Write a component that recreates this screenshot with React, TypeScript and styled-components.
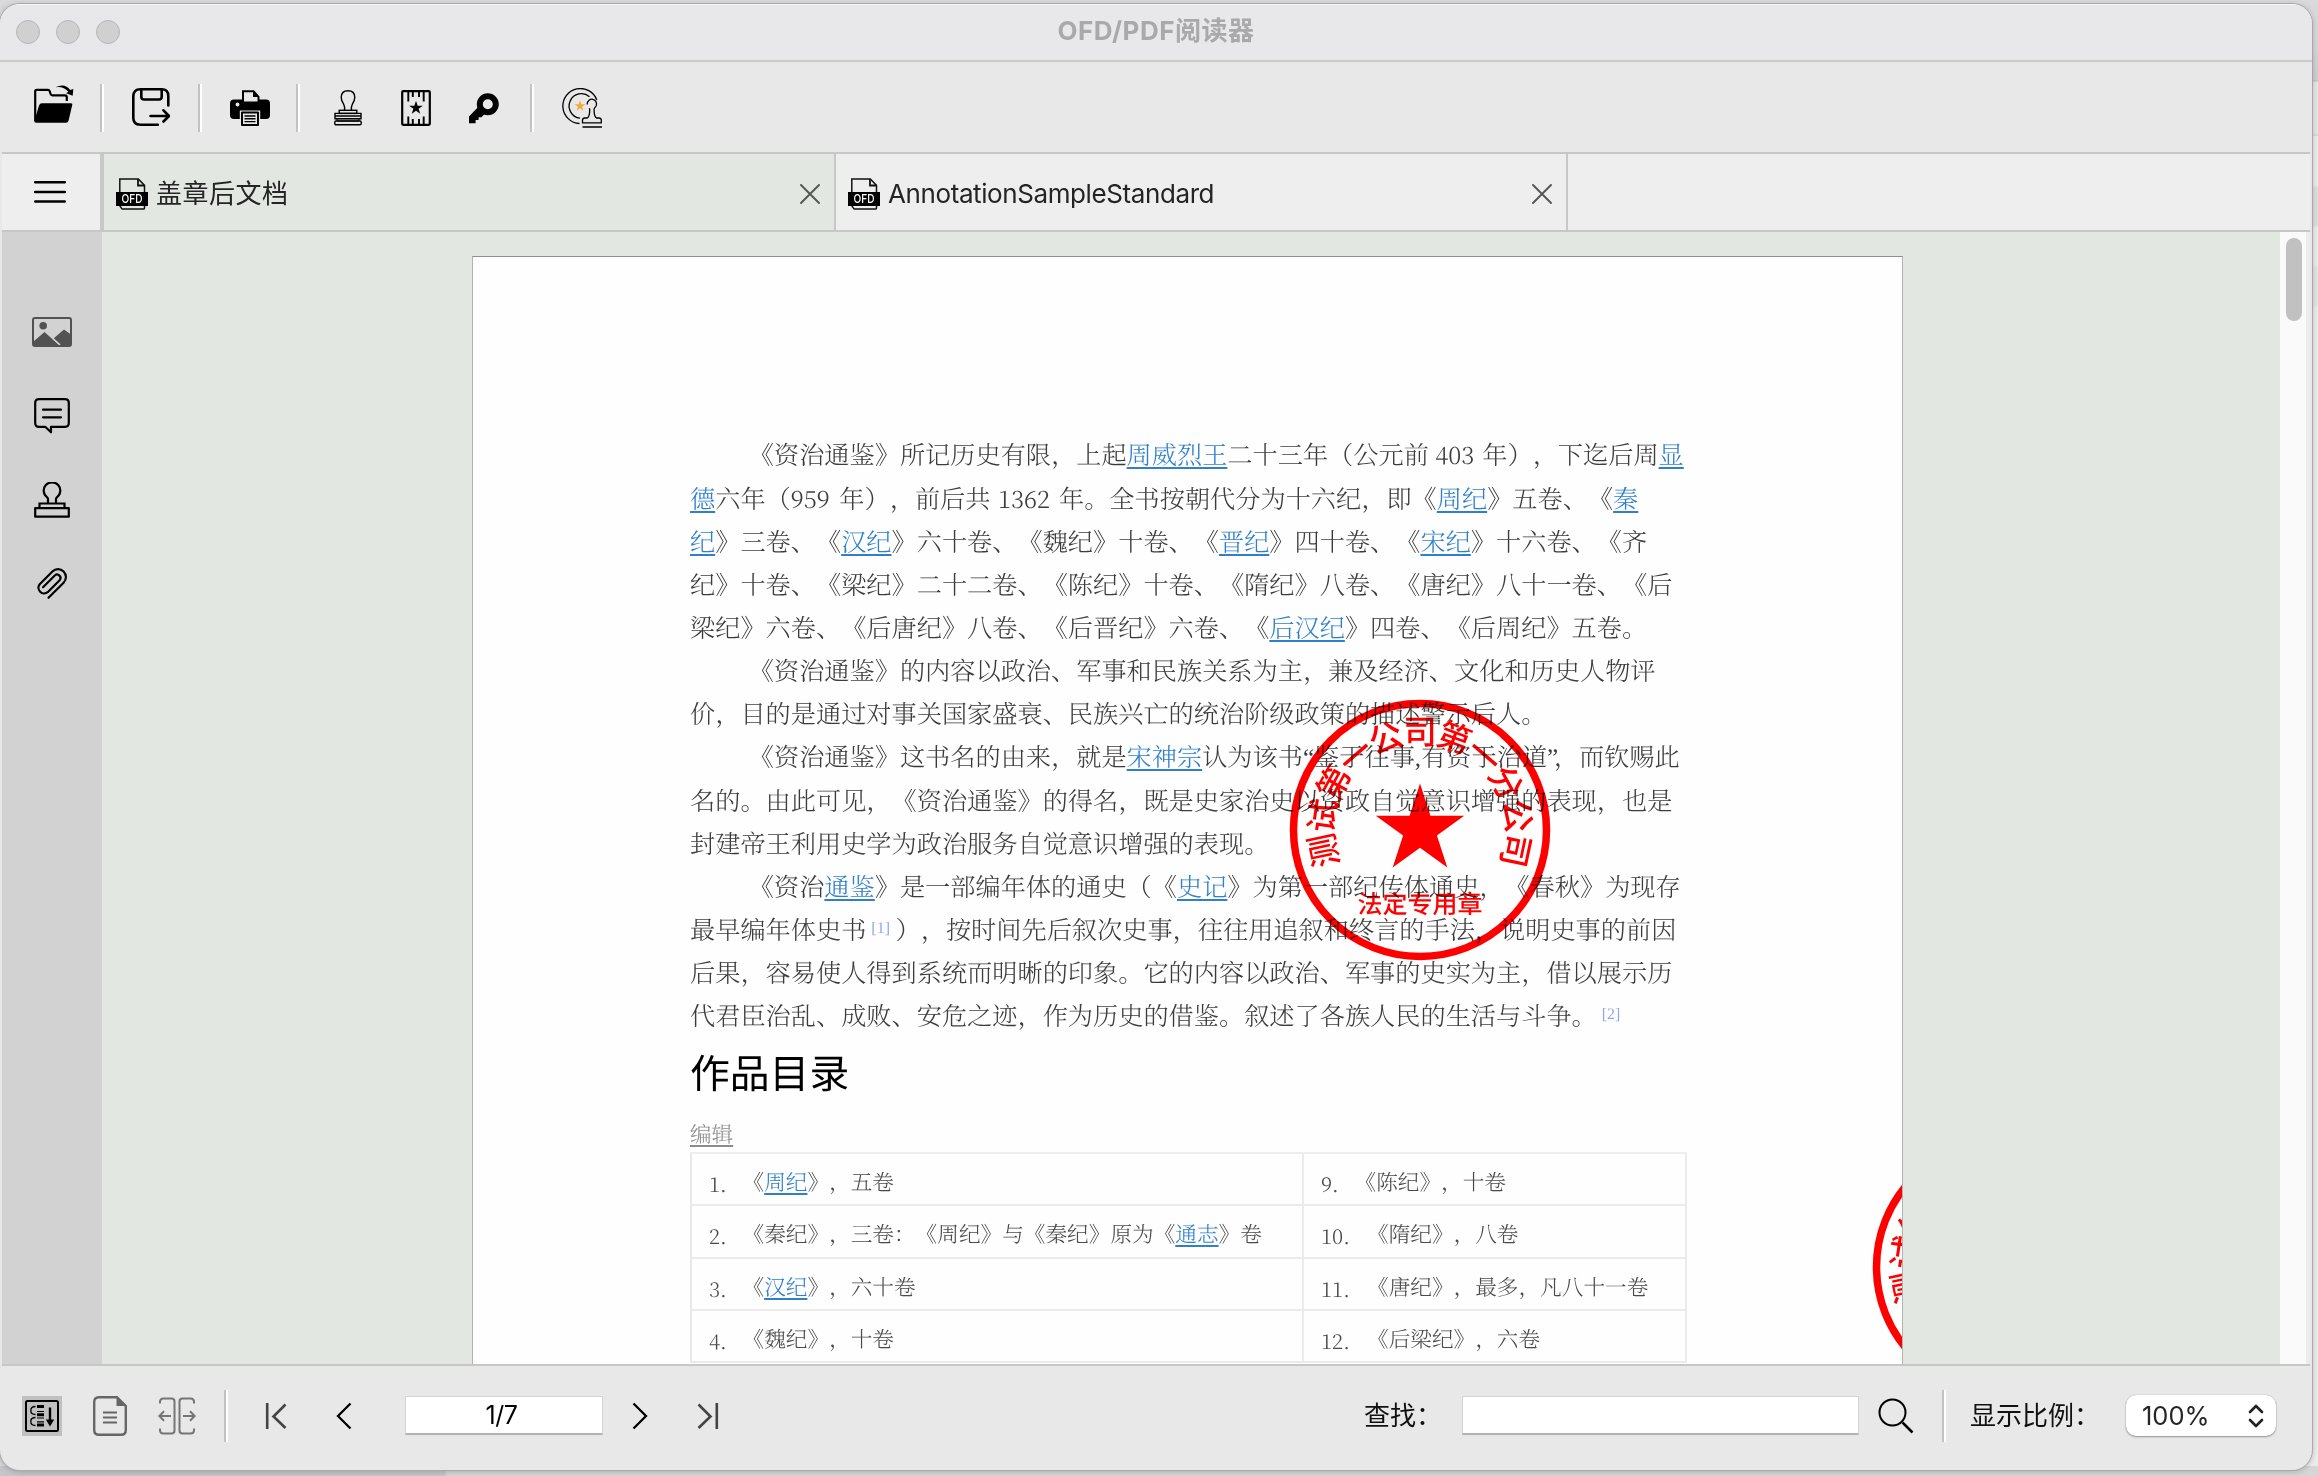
import React from 'react';
import styled, { createGlobalStyle } from 'styled-components';

const UI_FONT = `Inter, 'Noto Sans CJK SC', sans-serif`;
const DOC_FONT = `'Liberation Serif', 'Noto Serif CJK SC', 'Noto Sans CJK SC', serif`;
const CHROME = '#e8e8e8';
const CANVAS = '#e2e8e1';
const LINE = '#c6c8c6';

const GlobalStyle = createGlobalStyle`
  * { box-sizing: border-box; }
  html, body { margin: 0; padding: 0; }
  body { width: 2318px; height: 1476px; overflow: hidden; font-family: ${UI_FONT}; }
  svg { display: block; flex: none; }
`;

/* ---------- window frame ---------- */

const Desktop = styled.div`
  width: 2318px;
  height: 1476px;
  padding: 4px 6px 6px 0;
  background:
    linear-gradient(#dadadc, #dadadc) 0 0 / 100% 5px no-repeat,
    linear-gradient(90deg, #c6c6c8 445px, #d6d6d6 446px) 0 1466px / 100% 10px no-repeat,
    linear-gradient(#d8d8da 0 40px, #cfcfd1 80px, #bcbcbe 81px, #e6e6e6 82px 134px, #c8c8c8 135px, #ececec 136px 186px, #dedede 187px 226px, #ececec 227px 266px, #e4e4e4 267px 306px, #ececec 307px) 2300px 0 / 18px 100% no-repeat,
    #d8d8da;
`;

const Window = styled.main`
  display: flex;
  flex-direction: column;
  width: 2312px;
  height: 1466px;
  overflow: hidden;
  border-radius: 20px;
  background: ${CHROME};
  box-shadow: 0 0 0 1px #a9a9ab, 0 1px 6px rgba(0, 0, 0, 0.25);
`;

const TitleBar = styled.header`
  display: grid;
  grid-template-columns: 1fr auto 1fr;
  align-items: center;
  flex: none;
  height: 58px;
  padding: 0 16px;
  background: #e8e8ea;
  border-bottom: 2px solid #cacacb;
  box-shadow: inset 0 1px 0 #f6f6f7;
`;

const Lights = styled.div`
  display: flex;
  gap: 16px;
`;

const Light = styled.span`
  width: 24px;
  height: 24px;
  border-radius: 50%;
  background: #d0d0d1;
  border: 1px solid #b6b6b7;
`;

const Title = styled.h1`
  margin: 0;
  padding-bottom: 3px;
  font-size: 26px;
  font-weight: 700;
  line-height: 40px;
  color: #a9a9ab;
  letter-spacing: 0.5px;
`;

/* ---------- toolbar ---------- */

const ToolBar = styled.div`
  display: flex;
  align-items: center;
  flex: none;
  height: 92px;
  margin: 0 2px;
  padding-top: 2px;
  border-bottom: 2px solid ${LINE};
`;

const Tool = styled.button<{ $w: number; $pad?: number; $lift?: number }>`
  display: flex;
  align-items: center;
  justify-content: center;
  width: ${(p) => p.$w}px;
  height: 48px;
  padding: 0 0 ${(p) => p.$lift ?? 0}px;
  margin-left: ${(p) => p.$pad ?? 0}px;
  border: 0;
  background: none;
`;

const Divider = styled.i<{ $h: number; $ml?: number }>`
  flex: none;
  width: 4px;
  height: ${(p) => p.$h}px;
  margin-left: ${(p) => p.$ml ?? 0}px;
  background: linear-gradient(90deg, #c2c2c2 50%, #fff 50%);
`;

/* ---------- tabs ---------- */

const TabRow = styled.nav`
  display: flex;
  flex: none;
  height: 78px;
  margin: 0 2px;
  background: #eee;
  border-bottom: 2px solid ${LINE};
`;

const MenuButton = styled.button`
  display: flex;
  align-items: center;
  width: 102px;
  padding: 0 0 0 32px;
  border: 0;
  border-right: 4px solid ${LINE};
  background: #eee;
`;

const Tab = styled.div<{ $active?: boolean }>`
  display: flex;
  align-items: center;
  width: 732px;
  padding: 3px 14px 0 12px;
  border-right: 2px solid ${LINE};
  background: ${(p) => (p.$active ? CANVAS : '#eee')};
`;

const TabName = styled.span<{ $track: number }>`
  flex: 1;
  padding: 1px 0 0 8px;
  font-size: 26px;
  line-height: 36px;
  color: #242424;
  letter-spacing: ${(p) => p.$track}px;
`;

/* ---------- body ---------- */

const Body = styled.div`
  display: flex;
  flex: 1;
  min-height: 0;
  margin: 0 2px;
`;

const SideBar = styled.aside`
  display: flex;
  flex-direction: column;
  width: 100px;
  padding-top: 58px;
  background: #d2d2d2;
`;

const SideItem = styled.button`
  display: flex;
  align-items: center;
  justify-content: center;
  height: 84px;
  padding: 0;
  border: 0;
  background: none;
`;

const Canvas = styled.section`
  flex: 1;
  overflow: hidden;
  padding: 24px 0 0 370px;
  background: ${CANVAS};
`;

const Page = styled.article`
  position: relative;
  width: 1431px;
  height: 2000px;
  padding: 178.4px 216px 0 217px;
  overflow: hidden;
  background: #fefefe;
  border: 1px solid #b0b3b0;
  border-top-color: #8e908e;
  font-family: ${DOC_FONT};
  text-spacing-trim: space-all;
  text-rendering: geometricPrecision;
`;

const ScrollTrack = styled.div`
  width: 30px;
  padding: 6px 8px 0 6px;
  background: #fafafa;
  border-right: 4px solid #ececec;
`;

const ScrollThumb = styled.div`
  width: 16px;
  height: 83px;
  border-radius: 8px;
  background: #c1c1c1;
`;

/* ---------- document text ---------- */

const Line = styled.p<{ $indent?: boolean }>`
  margin: 0;
  height: 43.15px;
  padding-left: ${(p) => (p.$indent ? 58.8 : 0)}px;
  font-size: 25.2px;
  font-weight: 300;
  line-height: 43.15px;
  white-space: nowrap;
  color: #3c3c3c;
`;

const Link = styled.a`
  color: #2f7fca;
  text-decoration: underline;
  text-decoration-thickness: 2px;
  text-underline-offset: 3px;
`;

const Digits = styled.span<{ $l: number; $w: number; $r: number }>`
  display: inline-block;
  width: ${(p) => p.$w}px;
  margin: 0 ${(p) => p.$r}px 0 ${(p) => p.$l}px;
  font-family: 'Noto Serif CJK SC', serif;
  font-size: 24px;
  line-height: 30px;
`;

const Note = styled.span<{ $w: number }>`
  display: inline-block;
  width: ${(p) => p.$w}px;
  padding-left: 5px;
  font-size: 16px;
  line-height: 20px;
  vertical-align: 6px;
  color: #93a9e6;
`;

const Tight = styled.span`
  letter-spacing: -4.5px;
`;

const Heading = styled.h2`
  margin: 0;
  height: 73px;
  font-family: 'Noto Sans CJK SC', sans-serif;
  font-size: 39.8px;
  font-weight: 400;
  line-height: 65px;
  color: #000;
`;

const Edit = styled.div`
  height: 40px;
  padding-top: 3px;
  font-size: 21.6px;
  font-weight: 300;
  line-height: 40px;
  color: #8c8c8c;
  text-decoration: underline;
  text-decoration-thickness: 2px;
  text-underline-offset: 3px;
`;

const Catalog = styled.div`
  display: grid;
  grid-template-columns: 612px 383px;
  grid-auto-rows: 52.1px;
  width: 997px;
  border-top: 2px solid #eee;
  border-left: 2px solid #e8e8e8;
`;

const Cell = styled.div`
  display: flex;
  padding-left: 17px;
  border-right: 2px solid #ebebeb;
  border-bottom: 2px solid #ebebeb;
  font-size: 21.65px;
  font-weight: 300;
  line-height: 58px;
  color: #4a4a4a;
  white-space: nowrap;
`;

const Num = styled.span<{ $w: number }>`
  width: ${(p) => p.$w}px;
  font-family: 'Noto Serif CJK SC', serif;
  font-size: 20.5px;
`;

const StampLayer = styled.div<{ $x: number; $y: number }>`
  position: absolute;
  left: ${(p) => p.$x}px;
  top: ${(p) => p.$y}px;
  mix-blend-mode: multiply;
`;

/* ---------- status bar ---------- */

const StatusBar = styled.footer`
  display: flex;
  align-items: center;
  flex: none;
  height: 106px;
  margin: 0 2px;
  padding: 0 34px 5px 20px;
  border-top: 2px solid ${LINE};
`;

const IconButton = styled.button<{ $w: number; $ml?: number; $on?: boolean }>`
  display: flex;
  align-items: center;
  justify-content: center;
  flex: none;
  width: ${(p) => p.$w}px;
  height: 40px;
  margin-left: ${(p) => p.$ml ?? 0}px;
  padding: 0;
  border: 0;
  background: ${(p) => (p.$on ? '#c0c0c0' : 'none')};
`;

const Field = styled.input<{ $w: number; $ml: number }>`
  width: ${(p) => p.$w}px;
  height: 39px;
  margin-left: ${(p) => p.$ml}px;
  padding: 0 5px 0 0;
  border: 1px solid #d4d4d4;
  border-bottom: 2px solid #b2b2b2;
  background: #fff;
  font-family: ${UI_FONT};
  font-size: 25px;
  letter-spacing: -0.4px;
  text-align: center;
  color: #000;
  outline: none;
`;

const Label = styled.label<{ $ml: number; $w: number }>`
  flex: none;
  width: ${(p) => p.$w}px;
  margin-left: ${(p) => p.$ml}px;
  font-size: 26px;
  line-height: 40px;
  white-space: nowrap;
  color: #111;
`;

const Select = styled.div`
  display: flex;
  align-items: center;
  justify-content: space-between;
  width: 150px;
  height: 41px;
  padding: 0 12px 0 16px;
  border-radius: 10px;
  background: #fff;
  box-shadow: 0 1px 2px rgba(0, 0, 0, 0.35), 0 0 1px rgba(0, 0, 0, 0.3);
  font-size: 25.5px;
  color: #262626;
`;

const Spacer = styled.span`
  flex: 1;
`;

/* ---------- icons ---------- */

const starPoints = (cx: number, cy: number, r: number) =>
  Array.from({ length: 10 }, (_, i) => {
    const a = (Math.PI / 5) * i - Math.PI / 2;
    const q = i % 2 ? r * 0.382 : r;
    return `${(cx + q * Math.cos(a)).toFixed(2)},${(cy + q * Math.sin(a)).toFixed(2)}`;
  }).join(' ');

const OpenIcon = () => (
  <svg width="40" height="40" viewBox="0 0 40 40" fill="none">
    <path d="M1.2 37V7.2q0-1.4 1.4-1.4H14q1.2 0 1.6 1.2l1 3q.4 1.3 1.8 1.3H31q1.8 0 1.8 1.8V17" stroke="#000" strokeWidth="2.2" />
    <path d="M8 19.2h29q1.7 0 1.3 1.6L34.6 36.6q-.5 2.2-2.6 2.2H2.2Q0 38.8.5 36.6L5 21.500q.7-2.300 3-2.300z" fill="#000" />
    <path d="M21.5 3.2Q31-1.500 36.200 6l3.100-1-.6 6.800-6.600-2.500 2.300-1.500Q29.500 2 21.500 3.200z" fill="#000" />
  </svg>
);

const SaveIcon = () => (
  <svg width="38" height="38" viewBox="0 0 38 38" fill="none" stroke="#000" strokeWidth="2.6" strokeLinecap="round" strokeLinejoin="round">
    <path d="M36.3 17.5V8q0-6.700-6.700-6.700H8.300q-7 0-7 7v21.400q0 7 7 7h17.500" />
    <path d="M9.300 1.500v7.200q0 2.800 2.800 2.800h14.800q2.800 0 2.800-2.800V1.500" />
    <path d="M18.500 28h18M31.500 22.300l5.500 5.700-5.500 5.500" />
  </svg>
);

const PrintIcon = () => (
  <svg width="40" height="36" viewBox="0 0 40 36">
    <rect y="9.5" width="40" height="19.5" rx="4" fill="#000" />
    <circle cx="7.5" cy="14.500" r="1.9" fill={CHROME} />
    <path d="M13 12.500V1.200h10.500l5 5.600v5.700z" fill={CHROME} stroke="#000" strokeWidth="2" />
    <path d="M23 1v6h6z" fill="#000" />
    <rect x="9.8" y="20.5" width="20.4" height="16" fill={CHROME} />
    <rect x="11" y="21.5" width="18" height="14.5" rx="1" fill="#000" />
    <rect x="13" y="23.5" width="14" height="10.5" fill={CHROME} />
    <path d="M14.500 26h11M14.500 28.800h11M14.500 31.600h11" stroke="#000" strokeWidth="1.4" />
  </svg>
);

const StampIcon = () => (
  <svg width="28" height="36" viewBox="0 0 28 36" fill="none" stroke="#000" strokeWidth="1.4">
    <path d="M10.600 20.300q.3-4-1-6.200Q7.200 10.500 7.200 7.300 7.400.800 14 .8t6.800 6.500q0 3.200-2.400 6.800-1.300 2.200-1 6.200" />
    <rect x="5.2" y="20.3" width="17.6" height="3.1" />
    <path d="M1 23.400h26v5.300H1zM1 26h26" />
    <rect x=".8" y="31" width="26.4" height="3.8" rx="1.2" />
    <path d="M3 28.700h22v2.300H3z" strokeWidth="1" />
  </svg>
);

const SeamIcon = () => (
  <svg width="30" height="36" viewBox="0 0 30 36" fill="none" stroke="#000">
    <rect x="1.2" y="1.2" width="27.6" height="33.6" rx="1" strokeWidth="2.2" />
    <path d="M7.300 2v9.500M11.800 2v5M18 2v5M22.700 2v9.500M7.300 34v-7.500M11.800 34v-5M18 34v-5M22.700 34v-7.500" strokeWidth="1.9" />
    <polygon points={starPoints(15, 18, 7.2)} fill="#000" stroke="none" />
  </svg>
);

const KeyIcon = () => (
  <svg width="30" height="31" viewBox="0 0 30 31">
    <circle cx="18.8" cy="11.2" r="8" fill="none" stroke="#000" strokeWidth="6" />
    <path d="M9.500 13.500L0 23.500V30.300h6.600v-3.200h3v-2.900h2.900l4.300-4.400z" fill="#000" />
  </svg>
);

const SealIcon = () => (
  <svg width="40" height="40" viewBox="0 0 40 40" fill="none" stroke="#000" strokeWidth="1.3">
    <path d="M34.800 12A17.500 17.500 0 1 0 17.500 35.500" />
    <path d="M27.500 8.700A12.300 12.300 0 1 0 18 30.200" />
    <polygon points={starPoints(18, 18, 5.8)} fill="#f5a83a" stroke="none" />
    <path d="M25.200 16.500a4.700 4.700 0 1 1 7.500 3.200q-.8.800-.6 3.300.2 5.500 2.400 7h2.500q2.300 0 2.300 2.300v2.500H20.500v-2.500q0-2.300 2.300-2.300h2.500q2.200-1.500 2.400-7 .1-1.800-.3-2.800" />
    <path d="M20.500 38.900h19.500" strokeWidth="1.5" />
  </svg>
);

const MenuIcon = () => (
  <svg width="32" height="24" viewBox="0 0 32 24" stroke="#000" strokeWidth="2.5" strokeLinecap="round">
    <path d="M1.200 2.300h29.600M1.200 12h29.600M1.200 21.500h29.600" />
  </svg>
);

const OfdIcon = () => (
  <svg width="32" height="32" viewBox="0 0 32 32">
    <path d="M3.800 15V.9h18.500l6.200 6.500V30q0 1.100-1.100 1.100H6.200L3.800 28" fill="none" stroke="#111" strokeWidth="1.5" />
    <path d="M22 1v6.500h6.500" fill="none" stroke="#111" strokeWidth="1.8" />
    <rect y="14" width="32" height="14" fill="#000" />
    <text x="16" y="25.2" textAnchor="middle" fontFamily="Inter, sans-serif" fontSize="12" fontWeight="500" fill="#fff" textLength="21" lengthAdjust="spacingAndGlyphs">OFD</text>
  </svg>
);

const CloseIcon = () => (
  <svg width="20" height="20" viewBox="0 0 20 20" stroke="#555" strokeWidth="1.9" strokeLinecap="round">
    <path d="M1 1l18 18M19 1L1 19" />
  </svg>
);

const ImageIcon = () => (
  <svg width="40" height="30" viewBox="0 0 40 30">
    <rect x="1" y="1" width="38" height="28" rx="2" fill="none" stroke="#525252" strokeWidth="2" />
    <circle cx="11.2" cy="8.8" r="3.8" fill="#525252" />
    <path d="M1 25L12.500 15l15 13.500H1z" fill="#525252" />
    <path d="M21.500 21.500L32 12.500l7 5V29H29.500z" fill="#525252" />
    <path d="M20.500 21l7.500 6.800" stroke="#d2d2d2" strokeWidth="1.4" />
  </svg>
);

const CommentIcon = () => (
  <svg width="36" height="36" viewBox="0 0 36 36" fill="none" stroke="#000" strokeWidth="2.2" strokeLinejoin="round" strokeLinecap="round">
    <path d="M5 1.200h26q3.800 0 3.800 3.800v20q0 3.800-3.800 3.800H17v5.500l-5.800-5.500H5q-3.800 0-3.800-3.800V5Q1.200 1.200 5 1.200z" />
    <path d="M9 11.700h18M9 19.300h18" />
  </svg>
);

const SideStampIcon = () => (
  <svg width="36" height="36" viewBox="0 0 36 36" fill="none" stroke="#000" strokeWidth="2.2">
    <path d="M14 21.500v-4.300q0-1-.9-1.900a8.300 8.300 0 1 1 9.800 0q-.9.900-.9 1.900v4.300" />
    <path d="M5.500 26v-4.500h25V26" />
    <rect x="1.2" y="26.2" width="33.6" height="8.5" strokeLinejoin="round" />
  </svg>
);

const ClipIcon = () => (
  <svg width="32" height="32" viewBox="0 0 32 32" fill="none" stroke="#000" strokeWidth="2.2" strokeLinecap="round" strokeLinejoin="round">
    <path d="M12.500 29.800L27.600 14.700A7.900 7.900 0 0 0 16.400 3.500L3.700 16.200a5.700 5.700 0 0 0 8 8L23.600 12.300a3.400 3.400 0 0 0-4.800-4.800L7 19.300" />
  </svg>
);

const ContinuousIcon = () => (
  <svg width="34" height="32" viewBox="0 0 34 32" fill="none" stroke="#000">
    <rect x="1" y="1" width="32" height="30" rx="1.5" strokeWidth="2" />
    <path d="M12 6.500h7M12 14.800h7M12 25h7" strokeWidth="3" />
    <path d="M12 11.500h7M12 18h7M12 21.800h7" strokeWidth="1.2" />
    <path d="M10.500 6.500q-4.700 0-4.700 4t4.700 4M10.500 17.500q-4.700 0-4.700 4t4.700 4" strokeWidth="1.3" />
    <path d="M25 7.500v14" strokeWidth="2.4" />
    <path d="M20.800 19.500h8.400L25 26.500z" fill="#000" stroke="none" />
  </svg>
);

const SinglePageIcon = () => (
  <svg width="34" height="40" viewBox="0 0 34 40" fill="none" stroke="#666" strokeWidth="2.4">
    <path d="M24 1.200H6q-4.800 0-4.800 4.800v28q0 4.800 4.800 4.800h22q4.800 0 4.800-4.800V10z" />
    <path d="M23.500.5v9.500H33.500z" fill="#666" stroke="none" />
    <path d="M10 16.500h14M10 21.500h14M10 26.500h14" strokeWidth="1.9" />
  </svg>
);

const FacingIcon = () => (
  <svg width="38" height="38" viewBox="0 0 38 38" fill="none" stroke="#757575" strokeWidth="2">
    <path d="M2 6.500V5q0-3.500 3.500-3.500h8q3 0 3 3v29q0 3-3 3h-8Q2 36.500 2 33v-1.500" />
    <path d="M36 6.500V5q0-3.500-3.500-3.500h-8q-3 0-3 3v29q0 3 3 3h8q3.500 0 3.500-3.500v-1.500" />
    <path d="M13 19H1.500M6 14.300L1.300 19 6 23.700M25 19h11.500M32 14.300l4.700 4.700-4.700 4.700" />
  </svg>
);

const Chevron = ({ dir, bar }: { dir: 'left' | 'right'; bar?: boolean }) => (
  <svg
    width="22"
    height="28"
    viewBox="0 0 22 28"
    fill="none"
    stroke={bar ? '#444' : '#000'}
    strokeWidth={bar ? 2.6 : 2.3}
    transform={dir === 'right' ? 'scale(-1 1)' : undefined}
  >
    {bar ? <path d="M2.200 1v26M20.500 2.500L8.500 14.500 20.500 26" /> : <path d="M17.500 1.500L5 14l12.500 12.500" />}
  </svg>
);

const SearchIcon = () => (
  <svg width="36" height="36" viewBox="0 0 36 36" fill="none" stroke="#000" strokeWidth="2">
    <circle cx="14.5" cy="14.5" r="13" />
    <path d="M24.500 24.500l10 10" strokeWidth="2.5" />
  </svg>
);

const StepperIcon = () => (
  <svg width="16" height="24" viewBox="0 0 16 24" fill="none" stroke="#222" strokeWidth="2.6" strokeLinecap="round" strokeLinejoin="round">
    <path d="M2 8l6-6 6 6M2 16l6 6 6-6" />
  </svg>
);

/* ---------- company seal ---------- */

const SEAL_TEXT = '测试第一公司第一分公司';

/* A seam seal is cut by the page edge, so only its first arc characters are printed. */
const CompanySeal = ({ x, y, seam }: { x: number; y: number; seam?: boolean }) => (
  <StampLayer $x={x - 131} $y={y - 131}>
    <svg width="262" height="262" viewBox="-131 -131 262 262" fill="#f00" fontFamily="'Noto Sans CJK SC', sans-serif">
      <circle r="126.5" fill="none" stroke="#f00" strokeWidth="7.5" />
      <polygon points={starPoints(0, 0, 46.5)} />
      {SEAL_TEXT.slice(0, seam ? 3 : undefined).split('').map((ch, i) => (
        <text key={i} transform={`rotate(${(i - 5) * 20.4})`} y="-86" fontSize="33.5" fontWeight="500" textAnchor="middle">
          {ch}
        </text>
      ))}
      {!seam && (
        <text y="82.5" fontSize="25" fontWeight="500" textAnchor="middle">
          法定专用章
        </text>
      )}
    </svg>
  </StampLayer>
);

/* ---------- catalogue data ---------- */

type Entry = { n: string; body: React.ReactNode };

const CATALOG: Entry[] = [
  { n: '1.', body: <>《<Link>周纪</Link>》，五卷</> },
  { n: '9.', body: '《陈纪》，十卷' },
  { n: '2.', body: <>《秦纪》，三卷：《周纪》与《秦纪》原为《<Link>通志</Link>》卷</> },
  { n: '10.', body: '《隋纪》，八卷' },
  { n: '3.', body: <>《<Link>汉纪</Link>》，六十卷</> },
  { n: '11.', body: '《唐纪》，最多，凡八十一卷' },
  { n: '4.', body: '《魏纪》，十卷' },
  { n: '12.', body: '《后梁纪》，六卷' },
];

const Document = () => (
  <Page>
    <Line $indent>
      《资治通鉴》所记历史有限，上起<Link>周威烈王</Link>二十三年（公元前<Digits $l={6.5} $w={40} $r={6.9}>403</Digits>年），下迄后周<Link>显</Link>
    </Line>
    <Line>
      <Link>德</Link>六年（<Digits $l={0} $w={40} $r={8.6}>959</Digits>年），前后共<Digits $l={7.5} $w={52} $r={9}>1362</Digits>年。全书按朝代分为十六纪，即《<Link>周纪</Link>》五卷、《<Link>秦</Link>
    </Line>
    <Line>
      <Link>纪</Link>》三卷、《<Link>汉纪</Link>》六十卷、《魏纪》十卷、《<Link>晋纪</Link>》四十卷、《<Link>宋纪</Link>》十六卷、《齐
    </Line>
    <Line>纪》十卷、《梁纪》二十二卷、《陈纪》十卷、《隋纪》八卷、《唐纪》八十一卷、《后</Line>
    <Line>
      梁纪》六卷、《后唐纪》八卷、《后晋纪》六卷、《<Link>后汉纪</Link>》四卷、《后周纪》五卷。
    </Line>
    <Line $indent>《资治通鉴》的内容以政治、军事和民族关系为主，兼及经济、文化和历史人物评</Line>
    <Line>价，目的是通过对事关国家盛衰、民族兴亡的统治阶级政策的描述警示后人。</Line>
    <Line $indent>
      《资治通鉴》这书名的由来，就是<Link>宋神宗</Link>认为该书“鉴于往事,有资于治道<Tight>”</Tight>，而钦赐此
    </Line>
    <Line>名的。由此可见，《资治通鉴》的得名，既是史家治史以资政自觉意识增强的表现，也是</Line>
    <Line>封建帝王利用史学为政治服务自觉意识增强的表现。</Line>
    <Line $indent>
      《资治<Link>通鉴</Link>》是一部编年体的通史（《<Link>史记</Link>》为第一部纪传体通史，《春秋》为现存
    </Line>
    <Line>
      最早编年体史书<Note $w={29.2}>[1]</Note>），按时间先后叙次史事，往往用追叙和终言的手法，说明史事的前因
    </Line>
    <Line>后果，容易使人得到系统而明晰的印象。它的内容以政治、军事的史实为主，借以展示历</Line>
    <Line>
      代君臣治乱、成败、安危之迹，作为历史的借鉴。叙述了各族人民的生活与斗争。<Note $w={29.2}>[2]</Note>
    </Line>
    <Heading>作品目录</Heading>
    <Edit>编辑</Edit>
    <Catalog>
      {CATALOG.map((e) => (
        <Cell key={e.n}>
          <Num $w={e.n.length > 2 ? 46 : 33.5}>{e.n}</Num>
          <span>{e.body}</span>
        </Cell>
      ))}
    </Catalog>
    <CompanySeal x={947} y={572.5} />
    <CompanySeal x={1529.5} y={1009.5} seam />
  </Page>
);

export default function App() {
  return (
    <Desktop>
      <GlobalStyle />
      <Window>
        <TitleBar>
          <Lights>
            <Light />
            <Light />
            <Light />
          </Lights>
          <Title>OFD/PDF阅读器</Title>
          <span />
        </TitleBar>

        <ToolBar>
          <Tool $w={40} $pad={32} $lift={8}><OpenIcon /></Tool>
          <Divider $h={48} $ml={26} />
          <Tool $w={38} $pad={28} $lift={2}><SaveIcon /></Tool>
          <Divider $h={48} $ml={28} />
          <Tool $w={40} $pad={28}><PrintIcon /></Tool>
          <Divider $h={48} $ml={26} />
          <Tool $w={28} $pad={34}><StampIcon /></Tool>
          <Tool $w={30} $pad={39}><SeamIcon /></Tool>
          <Tool $w={30} $pad={38}><KeyIcon /></Tool>
          <Divider $h={48} $ml={31} />
          <Tool $w={40} $pad={28}><SealIcon /></Tool>
        </ToolBar>

        <TabRow>
          <MenuButton><MenuIcon /></MenuButton>
          <Tab $active>
            <OfdIcon />
            <TabName $track={0.5}>盖章后文档</TabName>
            <CloseIcon />
          </Tab>
          <Tab>
            <OfdIcon />
            <TabName $track={-0.4}>AnnotationSampleStandard</TabName>
            <CloseIcon />
          </Tab>
        </TabRow>

        <Body>
          <SideBar>
            <SideItem><ImageIcon /></SideItem>
            <SideItem><CommentIcon /></SideItem>
            <SideItem><SideStampIcon /></SideItem>
            <SideItem><ClipIcon /></SideItem>
          </SideBar>
          <Canvas>
            <Document />
          </Canvas>
          <ScrollTrack>
            <ScrollThumb />
          </ScrollTrack>
        </Body>

        <StatusBar>
          <IconButton $w={40} $on><ContinuousIcon /></IconButton>
          <IconButton $w={34} $ml={31}><SinglePageIcon /></IconButton>
          <IconButton $w={38} $ml={31}><FacingIcon /></IconButton>
          <Divider $h={52} $ml={28} />
          <IconButton $w={22} $ml={37}><Chevron dir="left" bar /></IconButton>
          <IconButton $w={22} $ml={46}><Chevron dir="left" /></IconButton>
          <Field $w={198} $ml={50} defaultValue="1/7" />
          <IconButton $w={22} $ml={26}><Chevron dir="right" /></IconButton>
          <IconButton $w={22} $ml={46}><Chevron dir="right" bar /></IconButton>
          <Spacer />
          <Label $ml={0} $w={98}>查找：</Label>
          <Field $w={397} $ml={0} />
          <IconButton $w={36} $ml={19}><SearchIcon /></IconButton>
          <Divider $h={52} $ml={28} />
          <Label $ml={24} $w={156}>显示比例：</Label>
          <Select>
            100%
            <StepperIcon />
          </Select>
        </StatusBar>
      </Window>
    </Desktop>
  );
}
